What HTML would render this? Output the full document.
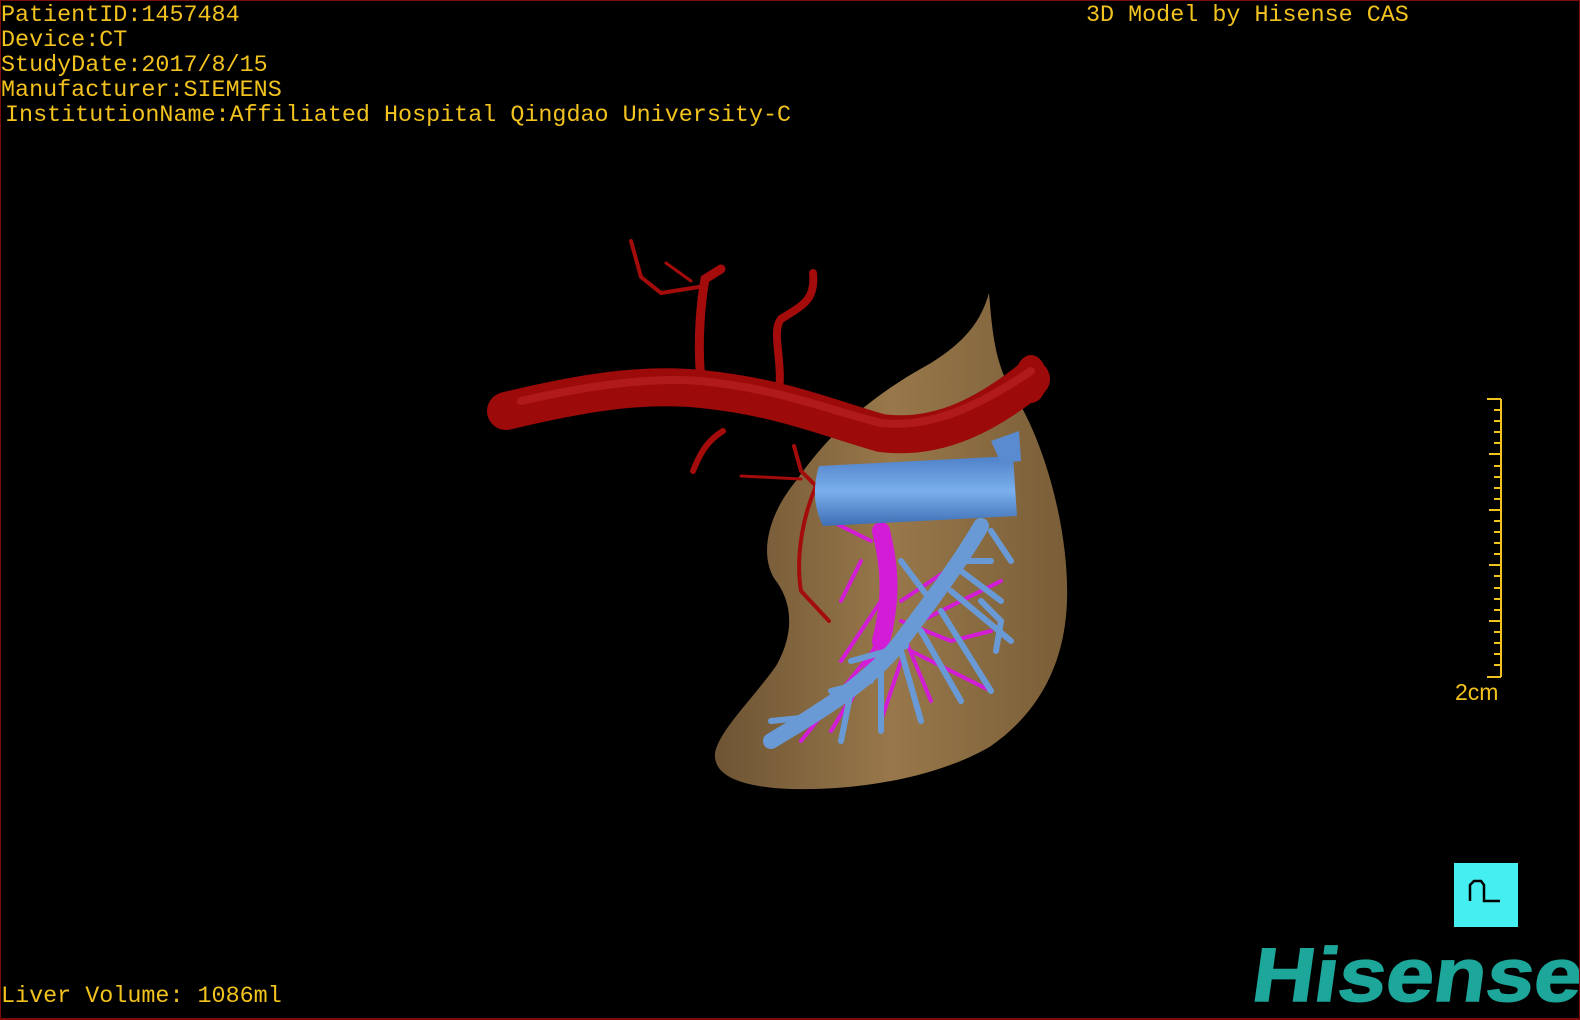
<!DOCTYPE html>
<html><head><meta charset="utf-8"><style>
html,body{margin:0;padding:0;background:#000;}
#s{position:relative;width:1580px;height:1020px;background:#000;overflow:hidden;box-sizing:border-box;border:1px solid #7a0c0c;border-bottom-width:2px;}
.t{position:absolute;color:#f2c21e;font-family:"Liberation Mono",monospace;font-size:23.4px;line-height:25px;white-space:pre;}
</style></head><body><div id="s">
<div class="t" style="left:0;top:3px;">PatientID:1457484
Device:CT
StudyDate:2017/8/15
Manufacturer:SIEMENS</div>
<div class="t" style="left:4px;top:103px;">InstitutionName:Affiliated Hospital Qingdao University-C</div>
<div class="t" style="left:1085px;top:3px;">3D Model by Hisense CAS</div>
<div class="t" style="left:0;top:984px;">Liver Volume: 1086ml</div>
<svg width="1580" height="1020" style="position:absolute;left:0;top:0">
<defs>
<linearGradient id="lv" x1="0" y1="0" x2="1" y2="0"><stop offset="0" stop-color="#6e5434"/><stop offset="0.5" stop-color="#98784a"/><stop offset="1" stop-color="#7a5e38"/></linearGradient>
<linearGradient id="bv" x1="0" y1="0" x2="0" y2="1"><stop offset="0" stop-color="#4e80c8"/><stop offset="0.5" stop-color="#7ab0ec"/><stop offset="1" stop-color="#3e6eb4"/></linearGradient>
</defs>
<!-- liver -->
<path d="M988,292 C992,340 995,370 1020,405 C1050,460 1068,540 1066,600 C1064,660 1040,710 990,745 C940,775 860,790 790,788 C740,786 712,775 714,752 C718,730 750,700 775,665 C795,630 790,600 775,580 C760,560 762,520 795,480 C830,430 870,395 930,362 C965,340 980,320 988,292Z" fill="url(#lv)"/>
<!-- ruler -->
<g stroke="#f2c21e" stroke-width="2">
<line x1="1500" y1="398" x2="1500" y2="676"/>
<line x1="1486" y1="398" x2="1500" y2="398"/>
<line x1="1486" y1="676" x2="1500" y2="676"/>
<path d="M1493,409h7M1493,420h7M1493,431h7M1493,442h7M1488,453h12M1493,465h7M1493,476h7M1493,487h7M1493,498h7M1488,509h12M1493,520h7M1493,531h7M1493,542h7M1493,553h7M1488,564h12M1493,575h7M1493,587h7M1493,598h7M1493,609h7M1488,620h12M1493,631h7M1493,642h7M1493,653h7M1493,664h7"/>
</g>
<text x="1454" y="699" fill="#f2c21e" font-family="Liberation Sans,sans-serif" font-size="23">2cm</text>
<!-- small red branches -->
<g fill="none" stroke="#a40c0c" stroke-linecap="round">
<path d="M700,380 C696,340 700,300 704,278 L720,268" stroke-width="9"/>
<path d="M704,285 L660,292 640,276 630,240" stroke-width="4"/>
<path d="M690,280 L665,262" stroke-width="3"/>
<path d="M778,390 C782,360 770,330 780,318 C800,305 815,300 812,272" stroke-width="8"/>
<path d="M722,430 C705,440 698,455 692,470" stroke-width="6"/>
<path d="M793,445 L800,470 815,485 C800,520 795,560 800,590 L828,620" stroke-width="4"/>
<path d="M740,475 L800,478" stroke-width="3"/>
</g>
<!-- aorta -->
<path d="M505,410 C580,392 640,382 700,388 C780,396 830,418 880,432 C940,440 990,410 1030,378" fill="none" stroke="#9c0a0a" stroke-width="38" stroke-linecap="round"/>
<ellipse cx="1030" cy="378" rx="16" ry="24" fill="#9c0a0a"/>
<path d="M520,400 C590,384 650,376 700,380 C780,388 830,410 880,422 C935,428 985,400 1030,370" fill="none" stroke="#c02424" stroke-width="8" stroke-linecap="round" opacity="0.6"/>
<!-- magenta -->
<g fill="none" stroke="#d21cd6" stroke-linecap="round">
<path d="M880,530 C890,570 890,600 880,640" stroke-width="18"/>
<path d="M880,600 L840,660 M885,620 L850,700 M890,630 L830,730 M900,620 L950,640 990,630 M900,600 L960,560 M905,640 L930,700 M880,640 L800,740 M910,650 L990,690 M920,620 L1000,580 M860,560 L840,600 M870,540 L830,520 M900,660 L880,720" stroke-width="4"/>
</g>
<!-- blue branches -->
<g fill="none" stroke="#6a9ad6" stroke-linecap="round">
<path d="M980,525 C960,560 930,600 900,640 C870,680 820,710 770,740" stroke-width="16"/>
<path d="M960,570 L1000,600 M950,590 L1010,640 M940,610 L990,690 M920,630 L960,700 M900,650 L920,720 M880,670 L880,730 M850,690 L840,740 M960,560 L990,560 M990,530 L1010,560 M930,600 L900,560 M905,645 L850,660 M870,680 L830,690 M980,600 L1000,620 L995,650 M820,715 L770,720" stroke-width="6"/>
</g>
<!-- blue vein -->
<path d="M818,465 L1012,455 1016,515 L822,525 C812,505 812,485 818,465Z" fill="url(#bv)"/>
<path d="M990,440 L1018,430 1020,460 1000,462Z" fill="#5a8ad0"/>
</svg>
<div style="position:absolute;left:1453px;top:862px;width:64px;height:64px;background:#45eef0;"></div>
<svg width="40" height="40" style="position:absolute;left:1465px;top:874px">
<path d="M4,26 L4,10 L8,6 L15,6 L18,10 L18,26 L34,26" fill="none" stroke="#000" stroke-width="2.5"/>
</svg>
<div style="position:absolute;left:1246px;top:930px;color:#1da69a;font-family:'Liberation Sans',sans-serif;font-weight:bold;font-size:76px;line-height:90px;transform:scaleX(1.13) skewX(-7deg);transform-origin:left bottom;-webkit-text-stroke:1.5px #1da69a;">Hisense</div>
</div></body></html>
